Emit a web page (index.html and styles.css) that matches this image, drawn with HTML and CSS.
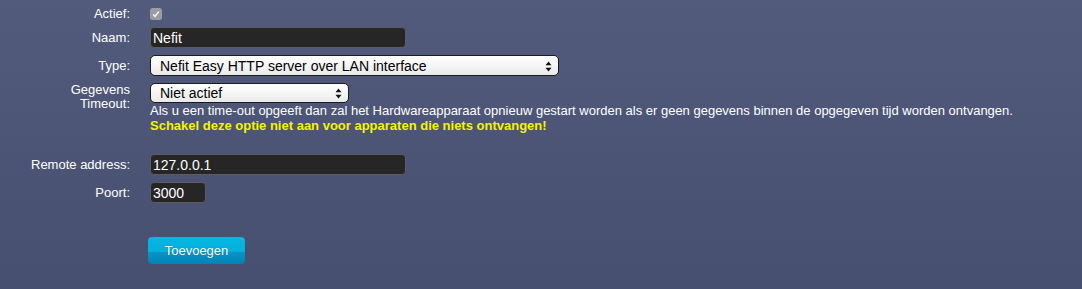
FILE: index.html
```html
<!DOCTYPE html>
<html lang="nl">

<head>
    <meta charset="UTF-8">
    <meta name="viewport" content="width=device-width, initial-scale=1.0">
    <title>Hardware</title>
    <link rel="stylesheet" href="styles.css">
</head>

<body>
    <div class="form">
        <div class="row row-check">
            <label class="label">Actief:</label>
            <span class="check">
                <svg width="12" height="12" viewBox="0 0 12 12">
                    <rect x="0" y="0" width="12" height="12" rx="2.5" fill="#9b9ca3" />
                    <path d="M3.2 6.4 L5 8.4 L8.8 3.6" fill="none" stroke="#fff" stroke-width="1.4" />
                </svg>
            </span>
        </div>
        <div class="row">
            <label class="label">Naam:</label>
            <input class="text wide" type="text" value="Nefit">
        </div>
        <div class="row">
            <label class="label">Type:</label>
            <div class="select-wrap type">
                <select class="select">
                    <option>Nefit Easy HTTP server over LAN interface</option>
                </select>
                <svg class="arrows" width="7" height="11" viewBox="0 0 7 11">
                    <path d="M3.5 0.5 L6.5 4.2 L0.5 4.2 Z M3.5 10.5 L6.5 6.8 L0.5 6.8 Z" fill="#111" />
                </svg>
            </div>
        </div>
        <div class="row row-timeout">
            <label class="label">Gegevens<br>Timeout:</label>
            <div>
                <div class="select-wrap timeout">
                    <select class="select">
                        <option>Niet actief</option>
                    </select>
                    <svg class="arrows" width="7" height="11" viewBox="0 0 7 11">
                        <path d="M3.5 0.5 L6.5 4.2 L0.5 4.2 Z M3.5 10.5 L6.5 6.8 L0.5 6.8 Z" fill="#111" />
                    </svg>
                </div>
                <p class="help">Als u een time-out opgeeft dan zal het Hardwareapparaat opnieuw gestart worden als er geen gegevens binnen de opgegeven tijd worden ontvangen.</p>
                <p class="help warn">Schakel deze optie niet aan voor apparaten die niets ontvangen!</p>
            </div>
        </div>
        <div class="row">
            <label class="label">Remote address:</label>
            <input class="text wide" type="text" value="127.0.0.1">
        </div>
        <div class="row">
            <label class="label">Poort:</label>
            <input class="text port" type="text" value="3000">
        </div>
        <div class="row row-button">
            <span></span>
            <button class="btn">Toevoegen</button>
        </div>
    </div>
</body>

</html>
```

FILE: styles.css
```css
* {
    padding: 0;
    margin: 0;
    box-sizing: border-box;
}

body {
    width: 1082px;
    height: 289px;
    overflow: hidden;
    background: linear-gradient(to bottom, #535b7d 0%, #464f70 100%);
    font-family: "Liberation Sans", Arial, sans-serif;
    font-size: 13px;
    color: #fff;
}

.form {
    padding-top: 3px;
}

.row {
    display: grid;
    grid-template-columns: 130px 1fr;
    column-gap: 20px;
    align-items: center;
    margin-bottom: 7px;
}

.label {
    text-align: right;
    line-height: 14px;
}

.row-check {
    height: 21px;
    margin-bottom: 3px;
}

.check {
    display: flex;
    height: 12px;
}

.text {
    height: 21px;
    background-color: #262626;
    border: 1px solid #5c5c5c;
    border-radius: 4px;
    color: #fff;
    font-family: "Liberation Sans", Arial, sans-serif;
    font-size: 14px;
    padding: 0 2px;
    outline: none;
}

.wide {
    width: 256px;
}

.port {
    width: 56px;
}

.select-wrap {
    position: relative;
    height: 21px;
}

.select-wrap.type {
    width: 409px;
}

.select-wrap.timeout {
    width: 199px;
    height: 20px;
}

.select {
    appearance: none;
    -webkit-appearance: none;
    width: 100%;
    height: 100%;
    border: 1px solid #1c1c1c;
    border-radius: 5px;
    background: linear-gradient(to bottom, #ffffff 0%, #f6f6f6 50%, #e9e9e9 100%);
    font-family: "Liberation Sans", Arial, sans-serif;
    font-size: 14px;
    color: #000;
    padding: 0 20px 0 9px;
    box-shadow: inset 0 1px 0 #fff;
}

.arrows {
    position: absolute;
    right: 7px;
    top: 50%;
    margin-top: -5px;
    pointer-events: none;
}

.row-timeout {
    align-items: start;
    margin-bottom: 21px;
}

.help {
    line-height: 15px;
    white-space: nowrap;
}

.warn {
    color: #f4f400;
    font-weight: bold;
}

.row-button {
    margin-top: 34px;
}

.btn {
    width: 97px;
    height: 27px;
    margin-left: -2px;
    border: none;
    border-radius: 4px;
    color: #fff;
    font-family: "Liberation Sans", Arial, sans-serif;
    font-size: 13px;
    text-shadow: 0 0 1px rgba(0, 60, 100, 0.5);
    background: linear-gradient(to bottom, #03b8e2 0%, #05aedb 55%, #0895c6 56%, #0382b7 100%);
    justify-self: start;
}
```
